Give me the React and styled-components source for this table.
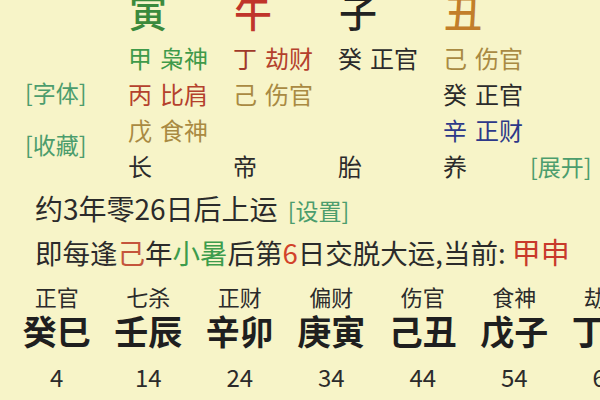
import React from "react";
import styled, { createGlobalStyle } from "styled-components";

const GlobalStyle = createGlobalStyle`
  html, body {
    margin: 0;
    padding: 0;
    background: #f7f4c8;
  }
  body {
    font-family: "Noto Sans CJK SC", "Noto Sans", sans-serif;
    color: #2b2b2b;
  }
`;

const Page = styled.div`
  width: 600px;
  height: 400px;
  overflow: hidden;
  background: #f7f4c8;
`;

const TopSection = styled.div`
  display: flex;
  margin-top: -7px;
`;

const SideLabels = styled.div`
  width: 103px;
  padding: 84px 0 0 25px;
  display: flex;
  flex-direction: column;
  gap: 22px;
`;

const LinkLabel = styled.span`
  font-size: 23px;
  line-height: 30px;
  color: #4c9d6d;
  white-space: nowrap;
`;

const PillarGrid = styled.div`
  display: grid;
  grid-template-columns: 105px 105px 105px 87px auto;
  grid-template-rows: 47px repeat(4, 36px);
`;

const BigChar = styled.div`
  font-size: 38px;
  line-height: 36px;
  font-weight: 500;
  color: ${(p) => p.$color};
  padding-left: 1px;
`;

const Cell = styled.div`
  font-size: 24px;
  line-height: 36px;
  white-space: nowrap;
  color: ${(p) => p.$color || "#2b2b2b"};
`;

const Stem = styled.span`
  margin-right: 8px;
  color: ${(p) => p.$color || "inherit"};
`;

const Line = styled.div`
  padding-left: 35px;
  font-size: ${(p) => p.$size || 28}px;
  line-height: 41px;
  white-space: nowrap;
  margin-top: ${(p) => p.$top || 0}px;
`;

const Hl = styled.span`
  color: ${(p) => p.$color};
  font-size: ${(p) => (p.$big ? "29px" : "inherit")};
`;

const SmallLink = styled.span`
  font-size: 23px;
  color: #4c9d6d;
  margin-left: 10px;
`;

const LuckGrid = styled.div`
  display: grid;
  grid-template-columns: repeat(7, 91.5px);
  margin: 8px 0 0 11px;
  text-align: center;
  white-space: nowrap;
`;

const God = styled.div`
  font-size: 22px;
  line-height: 30px;
`;

const Pair = styled.div`
  font-size: 34px;
  line-height: 34px;
  font-weight: 700;
  color: #1f1f1f;
  margin-top: 3px;
`;

const Age = styled.div`
  font-size: 24px;
  line-height: 30px;
  margin-top: 14px;
`;

const GREEN = "#3f9a4a";
const RED = "#b4412d";
const TAN = "#a98a42";
const DARK = "#2b2b2b";
const NAVY = "#2d3888";

const branches = [
  { ch: "寅", color: "#3b8a3c" },
  { ch: "午", color: "#c0352b" },
  { ch: "子", color: "#222" },
  { ch: "丑", color: "#c27e2a" },
];

const hidden = [
  [
    { stem: "甲", god: "枭神", color: GREEN },
    { stem: "丁", god: "劫财", color: RED, stemColor: "#a0392a" },
    { stem: "癸", god: "正官", color: DARK },
    { stem: "己", god: "伤官", color: TAN },
  ],
  [
    { stem: "丙", god: "比肩", color: RED },
    { stem: "己", god: "伤官", color: TAN },
    null,
    { stem: "癸", god: "正官", color: DARK },
  ],
  [
    { stem: "戊", god: "食神", color: TAN },
    null,
    null,
    { stem: "辛", god: "正财", color: NAVY },
  ],
];

const stages = ["长", "帝", "胎", "养"];

const luck = [
  { god: "正官", pair: "癸巳", age: 4 },
  { god: "七杀", pair: "壬辰", age: 14 },
  { god: "正财", pair: "辛卯", age: 24 },
  { god: "偏财", pair: "庚寅", age: 34 },
  { god: "伤官", pair: "己丑", age: 44 },
  { god: "食神", pair: "戊子", age: 54 },
  { god: "劫财", pair: "丁亥", age: 64 },
];

export default function App() {
  return (
    <Page>
      <GlobalStyle />
      <TopSection>
        <SideLabels>
          <LinkLabel>[字体]</LinkLabel>
          <LinkLabel>[收藏]</LinkLabel>
        </SideLabels>
        <PillarGrid>
          {branches.map((b) => (
            <BigChar key={b.ch} $color={b.color}>
              {b.ch}
            </BigChar>
          ))}
          <div />
          {hidden.map((row, i) => (
            <React.Fragment key={i}>
              {row.map((c, j) =>
                c ? (
                  <Cell key={j} $color={c.color}>
                    <Stem $color={c.stemColor}>{c.stem}</Stem>
                    {c.god}
                  </Cell>
                ) : (
                  <Cell key={j} />
                )
              )}
              <div />
            </React.Fragment>
          ))}
          {stages.map((s) => (
            <Cell key={s}>{s}</Cell>
          ))}
          <Cell>
            <LinkLabel>[展开]</LinkLabel>
          </Cell>
        </PillarGrid>
      </TopSection>
      <Line $top={4}>
        约3年零26日后上运<SmallLink>[设置]</SmallLink>
      </Line>
      <Line $size={27.5}>
        即每逢<Hl $color="#c4553c">己</Hl>年<Hl $color="#3d9c4c">小暑</Hl>后第
        <Hl $color="#d2432a">6</Hl>日交脱大运,当前:{" "}
        <Hl $color="#c8392b" $big>
          甲申
        </Hl>
      </Line>
      <LuckGrid>
        {luck.map((l) => (
          <God key={"g" + l.age}>{l.god}</God>
        ))}
        {luck.map((l) => (
          <Pair key={"p" + l.age}>{l.pair}</Pair>
        ))}
        {luck.map((l) => (
          <Age key={"a" + l.age}>{l.age}</Age>
        ))}
      </LuckGrid>
    </Page>
  );
}
